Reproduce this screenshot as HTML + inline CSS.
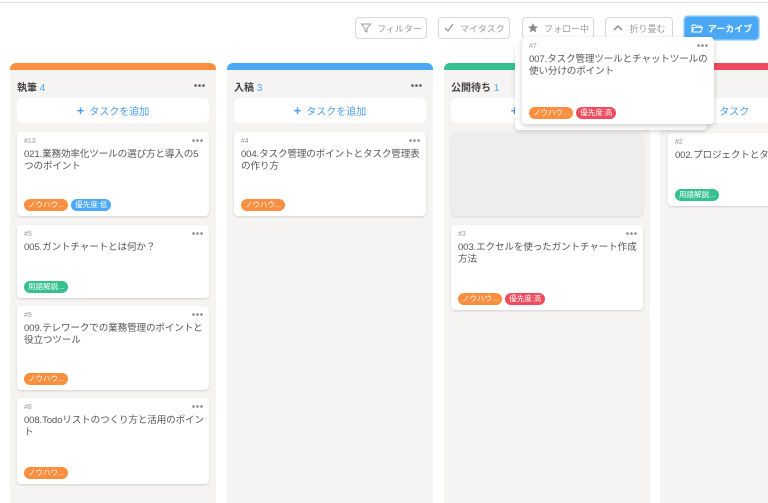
<!DOCTYPE html>
<html><head><meta charset="utf-8"><style>
*{margin:0;padding:0;box-sizing:border-box}
body{width:768px;height:500px;overflow:hidden;background:#fff;position:relative;font-family:"Liberation Sans","Noto Sans CJK JP",sans-serif;color:#555}
.topline{position:absolute;left:0;top:2px;width:768px;height:1px;background:#e4e4e4}
.btn{position:absolute;top:17px;height:22px;border:1px solid #d8d8d8;border-radius:4px;background:#fff;font-size:9px;color:#999;display:flex;align-items:center;justify-content:center;gap:5px}
.btn svg{width:12px;height:12px}
.btn.blue{background:#4aa8f5;border-color:#7cc0f8;color:#fff;font-weight:bold;box-shadow:0 0 0 1px #b9dcfb}
.col{position:absolute;top:63px;width:206px;height:440px;background:#f5f4f2;border-radius:6px 6px 0 0;overflow:hidden}
.col .bar{height:7px}
.hd{position:absolute;top:16px;left:7px;font-size:10px;color:#444;font-weight:bold}
.hd span{color:#4aa8f5;font-weight:normal}
.dots{position:absolute;width:12px;height:4px}
.add{position:absolute;left:7px;top:35px;width:192px;height:25px;background:#fff;border-radius:5px;color:#4a9cf0;font-size:10px;text-align:center;line-height:25px}
.add b{font-size:13px;margin-right:5px;font-weight:bold}
.card{position:absolute;left:7px;width:192px;background:#fff;border-radius:4px;box-shadow:0 1px 2px rgba(0,0,0,.15)}
.id{position:absolute;left:7px;top:6px;font-size:7px;color:#999}
.cd{position:absolute;right:6px;top:7px;width:11px;height:3px}
.t{position:absolute;left:7px;top:17px;right:4px;font-size:9.6px;line-height:12px;color:#555;letter-spacing:-0.15px}
.tags{position:absolute;left:7px;bottom:5px;display:flex;gap:3px}
.tag{height:12px;border-radius:6px;font-size:7.5px;color:#fff;padding:0 4px;line-height:12px;white-space:nowrap}
.o{background:#fb8f3f}.b{background:#4aa8f5}.g{background:#35c18f}.r{background:#ef4a5e}
</style></head><body>
<svg width="0" height="0" style="position:absolute"><defs><g id="d3"><circle cx="1.5" cy="1.5" r="1.3"/><circle cx="5.5" cy="1.5" r="1.3"/><circle cx="9.5" cy="1.5" r="1.3"/></g></defs></svg>
<div class="topline"></div>
<div class="btn" style="left:355px;width:72px"><svg viewBox="0 0 12 12"><path d="M1.5 2h9L7 6.5V10L5 9V6.5z" fill="none" stroke="#999" stroke-width="1"/></svg>フィルター</div>
<div class="btn" style="left:438px;width:72px"><svg viewBox="0 0 12 12"><path d="M2 6l3 3 5-7" fill="none" stroke="#999" stroke-width="1.3"/></svg>マイタスク</div>
<div class="btn" style="left:522px;width:72px"><svg viewBox="0 0 12 12"><path d="M6 1l1.5 3.3 3.5.3-2.7 2.3.9 3.5L6 8.5 2.8 10.4l.9-3.5L1 4.6l3.5-.3z" fill="#888"/></svg>フォロー中</div>
<div class="btn" style="left:605px;width:68px"><svg viewBox="0 0 12 12"><path d="M2 8l4-4 4 4" fill="none" stroke="#888" stroke-width="1.4"/></svg>折り畳む</div>
<div class="btn blue" style="left:684px;width:75px;top:16px;height:24px"><svg viewBox="0 0 12 12"><path d="M1 3h3.5l1 1H10v1.5M1 3v7h8.5l2-4.5H3L1 10" fill="none" stroke="#fff" stroke-width="1"/></svg>アーカイブ</div>

<div class="col" style="left:10px"><div class="bar o"></div>
<div class="hd">執筆 <span>4</span></div><svg class="dots" style="right:10px;top:21px" fill="#555" viewBox="0 0 12 4"><use href="#d3"/></svg>
<div class="add"><b>+</b>タスクを追加</div>
<div class="card" style="top:69px;height:84px"><div class="id">#13</div><svg class="cd" fill="#888" viewBox="0 0 11 3"><use href="#d3"/></svg><div class="t">021.業務効率化ツールの選び方と導入の5つのポイント</div><div class="tags"><div class="tag o">ノウハウ...</div><div class="tag b">優先度:低</div></div></div>
<div class="card" style="top:162px;height:73px"><div class="id">#5</div><svg class="cd" fill="#888" viewBox="0 0 11 3"><use href="#d3"/></svg><div class="t">005.ガントチャートとは何か？</div><div class="tags"><div class="tag g">用語解説...</div></div></div>
<div class="card" style="top:243px;height:84px"><div class="id">#9</div><svg class="cd" fill="#888" viewBox="0 0 11 3"><use href="#d3"/></svg><div class="t">009.テレワークでの業務管理のポイントと役立つツール</div><div class="tags"><div class="tag o">ノウハウ...</div></div></div>
<div class="card" style="top:335px;height:86px"><div class="id">#8</div><svg class="cd" fill="#888" viewBox="0 0 11 3"><use href="#d3"/></svg><div class="t">008.Todoリストのつくり方と活用のポイント</div><div class="tags"><div class="tag o">ノウハウ...</div></div></div>
</div>

<div class="col" style="left:227px"><div class="bar b"></div>
<div class="hd">入稿 <span>3</span></div><svg class="dots" style="right:10px;top:21px" fill="#555" viewBox="0 0 12 4"><use href="#d3"/></svg>
<div class="add"><b>+</b>タスクを追加</div>
<div class="card" style="top:69px;height:84px"><div class="id">#4</div><svg class="cd" fill="#888" viewBox="0 0 11 3"><use href="#d3"/></svg><div class="t">004.タスク管理のポイントとタスク管理表の作り方</div><div class="tags"><div class="tag o">ノウハウ...</div></div></div>
</div>

<div class="col" style="left:444px"><div class="bar g"></div>
<div class="hd">公開待ち <span>1</span></div>
<div class="add"><b>+</b>タスクを追加</div>
<div style="position:absolute;left:7px;top:70px;width:192px;height:83px;background:#eeedeb;border-radius:4px;box-shadow:0 1px 2px rgba(0,0,0,.12)"></div>
<div class="card" style="top:162px;height:85px"><div class="id">#3</div><svg class="cd" fill="#888" viewBox="0 0 11 3"><use href="#d3"/></svg><div class="t">003.エクセルを使ったガントチャート作成方法</div><div class="tags"><div class="tag o">ノウハウ...</div><div class="tag r">優先度:高</div></div></div>
</div>

<div class="col" style="left:660px;width:120px"><div class="bar r"></div>
<div class="add" style="left:8px;width:120px"><b>+</b>タスク</div>
<div class="card" style="top:70px;left:8px;width:120px;height:73px"><div class="id">#2</div><div class="t" style="white-space:nowrap">002.プロジェクトとタスク</div><div class="tags"><div class="tag g">用語解説...</div></div></div>
</div>

<div style="position:absolute;left:515px;top:44px;width:192px;height:86px;background:#fff;border-radius:4px;box-shadow:0 2px 4px rgba(0,0,0,.15)"></div>
<div class="card" style="left:522px;top:37px;width:192px;height:87px;box-shadow:0 2px 6px rgba(0,0,0,.2)"><div class="id">#7</div><svg class="cd" fill="#888" viewBox="0 0 11 3"><use href="#d3"/></svg><div class="t">007.タスク管理ツールとチャットツールの使い分けのポイント</div><div class="tags"><div class="tag o">ノウハウ...</div><div class="tag r">優先度:高</div></div></div>
</body></html>
